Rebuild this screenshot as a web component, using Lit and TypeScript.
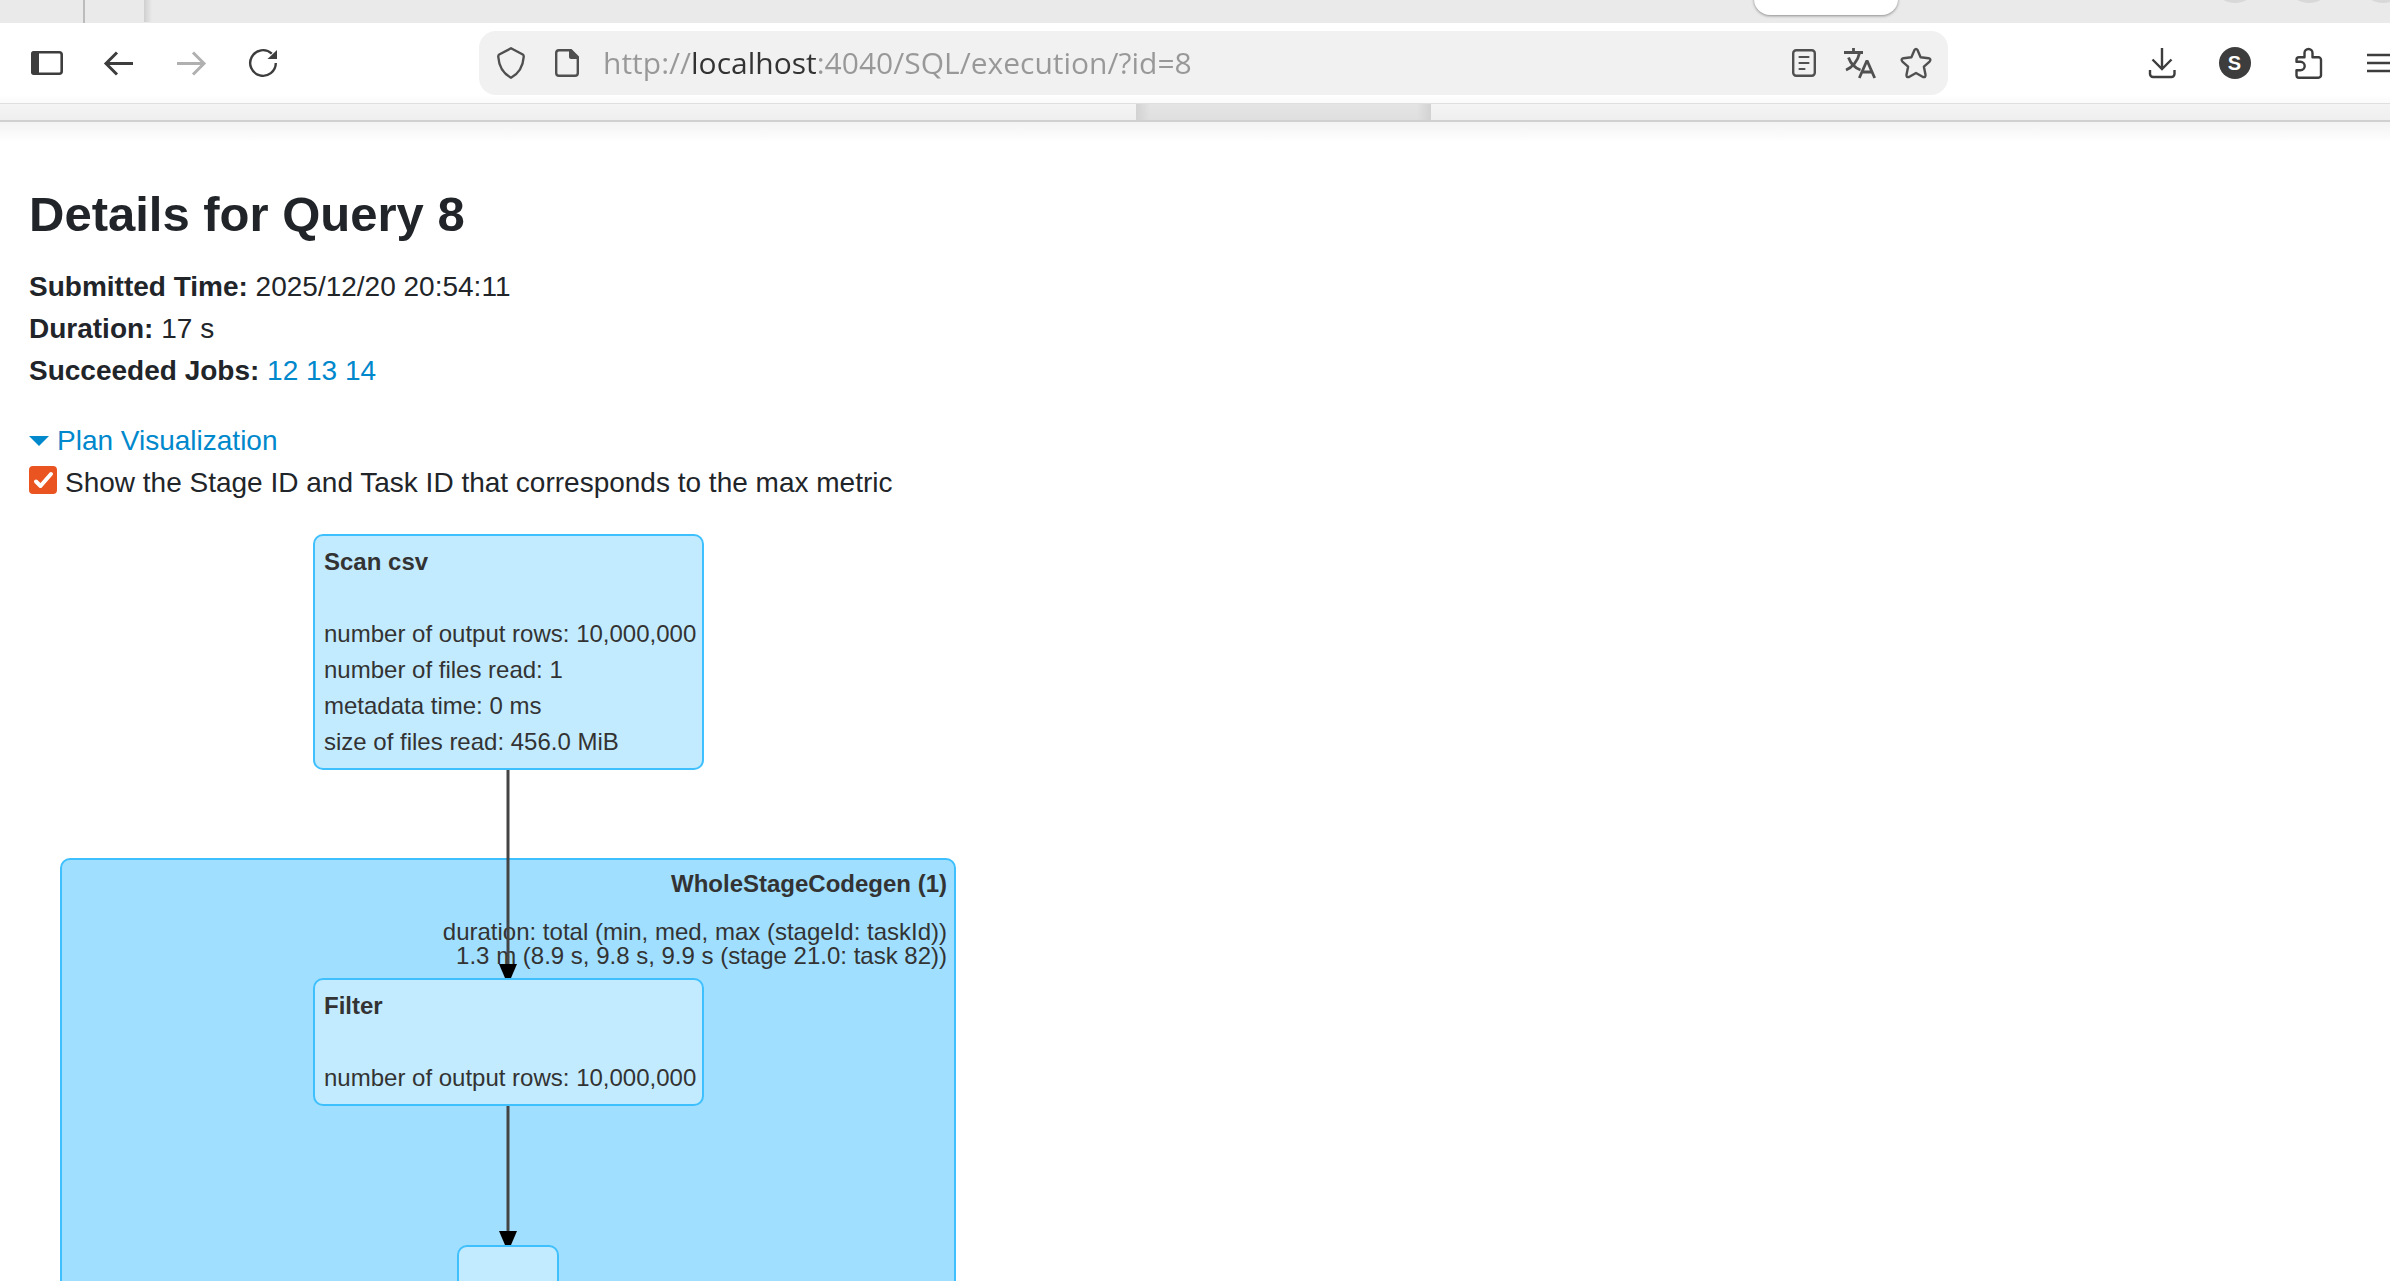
import { LitElement, html, css, svg } from "lit";
import { customElement } from "lit/decorators.js";
import { styleMap } from "lit/directives/style-map.js";

interface PlanNode {
  x: number;
  y: number;
  width: number;
  title: string;
  metrics: string[];
}

interface PlanEdge {
  x: number;
  y1: number;
  y2: number;
}

const NODES: PlanNode[] = [
  {
    x: 284, y: 30, width: 391, title: "Scan csv",
    metrics: [
      "number of output rows: 10,000,000",
      "number of files read: 1",
      "metadata time: 0 ms",
      "size of files read: 456.0 MiB",
    ],
  },
  { x: 284, y: 474, width: 391, title: "Filter", metrics: ["number of output rows: 10,000,000"] },
  { x: 428, y: 741, width: 102, title: "", metrics: [] },
];

const EDGES: PlanEdge[] = [
  { x: 479, y1: 266, y2: 474 },
  { x: 479, y1: 602, y2: 741 },
];

const ICONS = {
  sidebar: svg`<rect x="3.300" y="7.300" width="29.400" height="21.400" rx="2.500" fill="none" stroke="currentColor" stroke-width="2.600"/><path d="M5 6h5v24H5a3 3 0 0 1-3-3V9a3 3 0 0 1 3-3z" fill="currentColor"/>`,
  back: svg`<path d="M32 18.500H5.500M16 7.500L5 18.500L16 29.500" fill="none" stroke="currentColor" stroke-width="3"/>`,
  forward: svg`<path d="M4 18.500H30.500M20 7.500L31 18.500L20 29.500" fill="none" stroke="currentColor" stroke-width="3"/>`,
  reload: svg`<path d="M30.800 18a12.800 12.800 0 1 1-4-9.300" fill="none" stroke="currentColor" stroke-width="2.400"/><path d="M32 5v9h-9.500z" fill="currentColor"/>`,
  shield: svg`<path d="M18 3.300L29.800 9.500Q30.900 10.200 30.700 12C30 21.500 26 28.500 18 32.700C10 28.500 6 21.500 5.300 12Q5.100 10.200 6.200 9.500Z" fill="none" stroke="currentColor" stroke-width="2.400" stroke-linejoin="round"/>`,
  page: svg`<path d="M10 5.200h12L28.800 12v16a2.800 2.800 0 0 1-2.800 2.800H10A2.800 2.800 0 0 1 7.200 28V8A2.800 2.800 0 0 1 10 5.200z" fill="none" stroke="currentColor" stroke-width="2.400"/><path d="M20 4.500h2.500L29.500 12v2H22a2 2 0 0 1-2-2z" fill="currentColor"/>`,
  reader: svg`<rect x="7.200" y="5.200" width="21.600" height="25.600" rx="3" fill="none" stroke="currentColor" stroke-width="2.400"/><path d="M13.500 12h9M13.500 18h9M13.500 24h5" fill="none" stroke="currentColor" stroke-width="2.200" stroke-linecap="round"/>`,
  translate: svg`<path d="M2 7.500H21M11.500 3V7.500M4 25C10 22.500 16 16 17.500 8M6.500 12.500C8.500 18 13 23 18.500 25" fill="none" stroke="currentColor" stroke-width="2.800"/><path d="M17.300 33L25 15.500L32.700 33M20 27H30" fill="none" stroke="currentColor" stroke-width="2.800" stroke-linejoin="bevel"/>`,
  star: svg`<path d="M16.500 5Q18 2.700 19.500 5L22.600 12.300L30.500 13.200Q33.600 14 31.600 16.600L25.900 21.700L27.500 29.700Q27.800 32.800 25 32L18 28L11 32Q8.200 32.800 8.500 29.700L10.100 21.700L4.400 16.600Q2.400 14 5.500 13.200L13.400 12.300Z" fill="none" stroke="currentColor" stroke-width="2.400" stroke-linejoin="round"/>`,
  download: svg`<path d="M18 3V23.500M8.500 14.500L18 24L27.500 14.500" fill="none" stroke="currentColor" stroke-width="2.400"/><path d="M6 25v4a3 3 0 0 0 3 3H27.500a3 3 0 0 0 3-3V25" fill="none" stroke="currentColor" stroke-width="2.400"/>`,
  puzzle: svg`<path d="M14.500 12.300V8a4 4 0 0 1 8 0v4.300H28.500a2.500 2.500 0 0 1 2.500 2.500V30.200a2.500 2.500 0 0 1-2.500 2.500H9a2.500 2.500 0 0 1-2.500-2.500V25.200H10.500a4 4 0 0 0 0-8.400H6.500V14.800A2.500 2.500 0 0 1 9 12.300z" fill="none" stroke="currentColor" stroke-width="2.400" stroke-linejoin="round"/>`,
  menu: svg`<path d="M4 10H32M4 18H32M4 26H32" fill="none" stroke="currentColor" stroke-width="2.400"/>`,
};

const icon = (shape: unknown) =>
  html`<svg class="icon" viewBox="0 0 36 36" aria-hidden="true">${shape}</svg>`;

@customElement("browser-toolbar")
class BrowserToolbar extends LitElement {
  static styles = css`
    :host { display: block; font-family: "Open Sans", "Noto Sans", sans-serif; color: #3d3d3d; }
    * { box-sizing: border-box; }
    .tabs { position: relative; height: 23px; background: #eaeaea; overflow: hidden; }
    .divider { position: absolute; left: 83px; top: 0; width: 2px; height: 23px; background: #bcbcbc; }
    .tab-edge { position: absolute; left: 144px; top: 0; width: 8px; height: 22px; background: linear-gradient(to right, #cfcfcf, #eaeaea); }
    .pill { position: absolute; right: 492px; bottom: 8px; width: 144px; height: 40px; border-radius: 16px; background: #fff; box-shadow: 0 1px 3px rgba(0, 0, 0, 0.4); }
    .window-buttons { position: absolute; right: -17px; bottom: 20px; display: flex; gap: 26px; }
    .window-button { width: 48px; height: 48px; border-radius: 50%; background: #d8d8d8; }
    .bar { display: flex; align-items: center; height: 80px; padding-left: 11px; background: linear-gradient(#fff 90%, #fafafa); overflow: hidden; }
    .group { display: flex; flex: none; }
    button { flex: none; display: grid; place-items: center; height: 48px; margin: 0; padding: 0; border: 0; background: none; color: inherit; font: inherit; }
    .icon { display: block; width: 36px; height: 36px; }
    .nav button { width: 72px; }
    .nav button:disabled { color: #b0b0b0; }
    .address { flex: 1; display: flex; align-items: center; min-width: 0; height: 64px; margin: 0 177px 0 180px; padding: 0 4px; border-radius: 17px; background: #f1f1f1; color: #505050; }
    .address button { width: 56px; }
    .url {
      flex: 1; min-width: 0; height: 48px; margin: 0; padding: 0 0 2px 8px; border: 0; outline: 0;
      font-family: inherit; font-size: 30px; color: transparent;
      background: linear-gradient(to right, #989898 96px, #333 96px, #333 222px, #989898 222px);
      -webkit-background-clip: text; background-clip: text;
    }
    .tools { margin-right: -27px; }
    .tools button { width: 73px; }
    .account { display: grid; place-items: center; width: 32px; height: 32px; border-radius: 50%; background: #3d3d3d; color: #fff; font-family: "Liberation Sans", Arial, sans-serif; font-size: 20px; font-weight: 700; line-height: 32px; }
    .bookmarks { height: 19px; border-top: 1px solid #dfdfdf; border-bottom: 2px solid #d0d0d0; padding: 0 959px 0 1136px; background: linear-gradient(#f4f4f4, #efefef); }
    .folder { height: 16px; background: linear-gradient(to right, #d2d2d2, rgba(0, 0, 0, 0) 14px, rgba(0, 0, 0, 0) calc(100% - 14px), #d2d2d2), linear-gradient(#e4e4e4, #dfdfdf); }
  `;

  render() {
    return html`
      <div class="tabs">
        <span class="divider"></span>
        <span class="tab-edge"></span>
        <span class="pill"></span>
        <div class="window-buttons">
          <span class="window-button"></span><span class="window-button"></span><span class="window-button"></span>
        </div>
      </div>
      <div class="bar">
        <nav class="group nav">
          <button aria-label="Sidebar">${icon(ICONS.sidebar)}</button>
          <button aria-label="Back">${icon(ICONS.back)}</button>
          <button aria-label="Forward" disabled>${icon(ICONS.forward)}</button>
          <button aria-label="Reload">${icon(ICONS.reload)}</button>
        </nav>
        <div class="address">
          <button aria-label="Tracking protection">${icon(ICONS.shield)}</button>
          <button aria-label="Site information">${icon(ICONS.page)}</button>
          <input class="url" type="text" aria-label="Address" spellcheck="false" .value=${"http://localhost:4040/SQL/execution/?id=8"} />
          <button aria-label="Reader view">${icon(ICONS.reader)}</button>
          <button aria-label="Translate">${icon(ICONS.translate)}</button>
          <button aria-label="Bookmark">${icon(ICONS.star)}</button>
        </div>
        <div class="group tools">
          <button aria-label="Downloads">${icon(ICONS.download)}</button>
          <button aria-label="Account"><span class="account">S</span></button>
          <button aria-label="Extensions">${icon(ICONS.puzzle)}</button>
          <button aria-label="Menu">${icon(ICONS.menu)}</button>
        </div>
      </div>
      <div class="bookmarks"><div class="folder"></div></div>
    `;
  }
}

@customElement("plan-graph")
class PlanGraph extends LitElement {
  static styles = css`
    :host { display: block; position: relative; width: 928px; height: 960px; color: #333; font-size: 24px; line-height: 36px; }
    * { box-sizing: border-box; }
    .cluster, .node { position: absolute; border: 2px solid #3ec0ff; border-radius: 10px; }
    .cluster { left: 31px; top: 354px; width: 896px; height: 600px; padding: 6px 7px; background: #a0dfff; text-align: right; }
    .cluster-metric { margin-top: 18px; line-height: 24px; }
    .node { min-height: 80px; padding: 8px 9px; background: #c3ebff; white-space: nowrap; }
    .title { font-weight: 700; }
    .metrics { margin: 36px 0 0; padding: 0; list-style: none; }
    .edges { position: absolute; left: 0; top: 0; width: 100%; height: 100%; }
    .line { stroke: #444; stroke-width: 3px; }
  `;

  render() {
    return html`
      <section class="cluster">
        <div class="title">WholeStageCodegen (1)</div>
        <div class="cluster-metric">
          duration: total (min, med, max (stageId: taskId))<br />1.3 m (8.9 s, 9.8 s, 9.9 s (stage 21.0: task 82))
        </div>
      </section>
      <svg class="edges" aria-hidden="true">
        ${EDGES.map(
          (e) => svg`
            <line class="line" x1=${e.x} x2=${e.x} y1=${e.y1} y2=${e.y2 - 8}></line>
            <path d="M${e.x - 9} ${e.y2 - 14}h18l-6 14h-6z"></path>`
        )}
      </svg>
      ${NODES.map(
        (n) => html`
          <article class="node" style=${styleMap({ left: `${n.x}px`, top: `${n.y}px`, width: `${n.width}px` })}>
            ${n.title ? html`<div class="title">${n.title}</div>` : ""}
            ${n.metrics.length ? html`<ul class="metrics">${n.metrics.map((m) => html`<li>${m}</li>`)}</ul>` : ""}
          </article>`
      )}
    `;
  }
}

@customElement("app-root")
class AppRoot extends LitElement {
  static styles = css`
    :host { display: flex; flex-direction: column; height: 100vh; overflow: hidden; background: #fff; color: #212529; font-family: "Liberation Sans", Arial, sans-serif; font-size: 28px; line-height: 42px; }
    * { box-sizing: border-box; }
    browser-toolbar { flex: none; }
    .page { flex: 1; min-height: 0; overflow: hidden; padding: 63px 29px 0; background: linear-gradient(#f3f3f3, #fff 20px); }
    h1 { margin: 0 0 22px; font-size: 49px; line-height: 59px; font-weight: 700; }
    .summary { margin: 0 0 28px; padding: 0; list-style: none; }
    a { color: #0088cc; text-decoration: none; }
    .toggle { display: flex; align-items: center; gap: 8px; width: max-content; }
    .arrow { width: 20px; height: 10px; background: #0088cc; clip-path: polygon(0 0, 100% 0, 50% 100%); }
    .option { display: flex; align-items: center; gap: 8px; width: max-content; }
    .check { display: grid; padding-bottom: 6px; }
    .check > * { grid-area: 1 / 1; width: 28px; height: 28px; }
    .box { appearance: none; margin: 0; border-radius: 4px; background: #fff; border: 2px solid #999; }
    .box:checked { background: #e95420; border-color: #e95420; }
    .mark { pointer-events: none; }
  `;

  render() {
    return html`
      <browser-toolbar></browser-toolbar>
      <main class="page">
        <h1>Details for Query 8</h1>
        <ul class="summary">
          <li><strong>Submitted Time:</strong> 2025/12/20 20:54:11</li>
          <li><strong>Duration:</strong> 17 s</li>
          <li><strong>Succeeded Jobs:</strong> <a href="#job-12">12</a> <a href="#job-13">13</a> <a href="#job-14">14</a></li>
        </ul>
        <a class="toggle" href="#plan"><span class="arrow"></span><span>Plan Visualization</span></a>
        <div class="option">
          <span class="check">
            <input class="box" id="stage-ids" type="checkbox" checked />
            <svg class="mark" viewBox="0 0 28 28" aria-hidden="true">
              <path d="M7 15.500L11.500 20L22 8" fill="none" stroke="#fff" stroke-width="4" stroke-linecap="round" stroke-linejoin="round" />
            </svg>
          </span>
          <label for="stage-ids">Show the Stage ID and Task ID that corresponds to the max metric</label>
        </div>
        <plan-graph id="plan"></plan-graph>
      </main>
    `;
  }
}
